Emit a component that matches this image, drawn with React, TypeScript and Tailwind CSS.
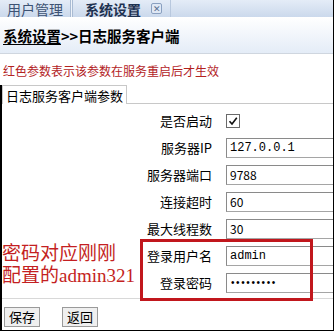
import React from "react";

const cjk = { fontFamily: '"Noto Sans CJK SC", "Noto Sans", sans-serif' };
const serif = { fontFamily: '"Liberation Serif", "Noto Sans CJK SC", serif' };

function Row({ label, children }: { label: string; children: React.ReactNode }) {
  return (
    <div className="flex h-[27px] items-center">
      <div className="w-[211px] shrink-0 pr-[1px] text-right text-[13px] leading-none text-black">{label}</div>
      <div className="ml-[13px] flex min-w-0 flex-1 items-center">{children}</div>
    </div>
  );
}

function Input({ value, mono = false, dots = false }: { value: string; mono?: boolean; dots?: boolean }) {
  return (
    <div
      className={
        "flex h-[20px] w-[140px] shrink-0 items-center border border-[#a5a5a5] border-t-[#8a8a8a] border-l-[#8a8a8a] bg-white text-black " +
        (dots ? "pl-[4px] text-[10px] tracking-[1.6px]" : "pl-[3px] text-[12px]")
      }
      style={
        mono
          ? { fontFamily: '"Liberation Mono", monospace' }
          : dots
          ? { fontFamily: '"Liberation Sans", sans-serif' }
          : undefined
      }
    >
      {value}
    </div>
  );
}

export default function App() {
  return (
    <div
      className="relative h-[331px] w-[334px] overflow-hidden border-r border-b border-black bg-white"
      style={cjk}
    >
      {/* top tab bar */}
      <div className="flex h-[17px] items-center bg-gradient-to-b from-[#e4ecf7] to-[#cbd9ec] text-[14px] leading-none">
        <div className="flex w-[70px] items-center justify-center text-[#3d5273]">用户管理</div>
        <div className="h-full w-[3px] border-x border-[#a9bbd3] bg-[#eef3fa]" />
        <div className="ml-[12px] font-bold text-[#1e3150]">系统设置</div>
        <div className="ml-[10px] flex h-[11px] w-[11px] items-center justify-center rounded-[2px] border border-[#8aa0c0] bg-[#dfe8f5] text-[9px] leading-none text-[#5a6f8f]">
          ✕
        </div>
        <div className="ml-[8px] h-full w-px bg-[#b8c8de]" />
      </div>

      {/* title */}
      <div className="flex h-[37px] items-center border-b border-[#cfd6df] bg-gradient-to-b from-white to-[#e4ecf7] pl-[3px] pt-[3px] text-[14.5px] font-bold leading-none text-black">
        <span className="underline underline-offset-2">系统设置</span>
        <span>&gt;&gt;日志服务客户端</span>
      </div>

      {/* note */}
      <div className="flex h-[31px] items-center pl-[3px] pt-[2px] text-[12px] leading-none text-[#b3231f]">
        红色参数表示该参数在服务重启后才生效
      </div>

      {/* form panel */}
      <div className="border-l-2 border-black">
        <div className="flex h-[19px] items-end">
          <div className="flex h-[19px] w-[125px] items-center justify-center border-x border-t border-[#c8c8c8] bg-white text-[13px] leading-none text-black">
            日志服务客户端参数
          </div>
          <div className="flex-1 border-b border-[#c8c8c8]" />
        </div>

        <div className="pt-[3px]">
          <Row label="是否启动">
            <div className="flex h-[14px] w-[14px] items-center justify-center border border-[#6a6a6a] bg-white">
              <svg width="10" height="10" viewBox="0 0 10 10">
                <path d="M1.5 5.2 L4 8 L8.8 1.8" fill="none" stroke="#111" strokeWidth="1.6" />
              </svg>
            </div>
          </Row>
          <Row label="服务器IP">
            <Input value="127.0.0.1" mono />
          </Row>
          <Row label="服务器端口">
            <Input value="9788" />
          </Row>
          <Row label="连接超时">
            <Input value="60" />
          </Row>
          <Row label="最大线程数">
            <Input value="30" />
          </Row>
          <Row label="登录用户名">
            <Input value="admin" mono />
          </Row>
          <Row label="登录密码">
            <Input value="•••••••••" dots />
          </Row>
        </div>

        <div className="mt-[2px] border-t border-[#d8d8d8]" />

        <div className="flex h-[33px] items-center gap-[22px] pl-[2px] pt-[2px]">
          <div className="flex h-[20px] w-[36px] items-center justify-center border border-[#9a9a9a] bg-[#efefef] text-[13px] leading-none text-black">
            保存
          </div>
          <div className="flex h-[20px] w-[36px] items-center justify-center border border-[#9a9a9a] bg-[#efefef] text-[13px] leading-none text-black">
            返回
          </div>
        </div>
      </div>

      {/* annotation */}
      <div className="absolute left-[140px] top-[239px] h-[62px] w-[173px] border-[3px] border-[#c1171d]" />
      <div
        className="absolute left-[2px] top-[243px] text-[19px] leading-[22px] text-[#c41f22]"
        style={serif}
      >
        <div>密码对应刚刚</div>
        <div>配置的admin321</div>
      </div>
    </div>
  );
}
